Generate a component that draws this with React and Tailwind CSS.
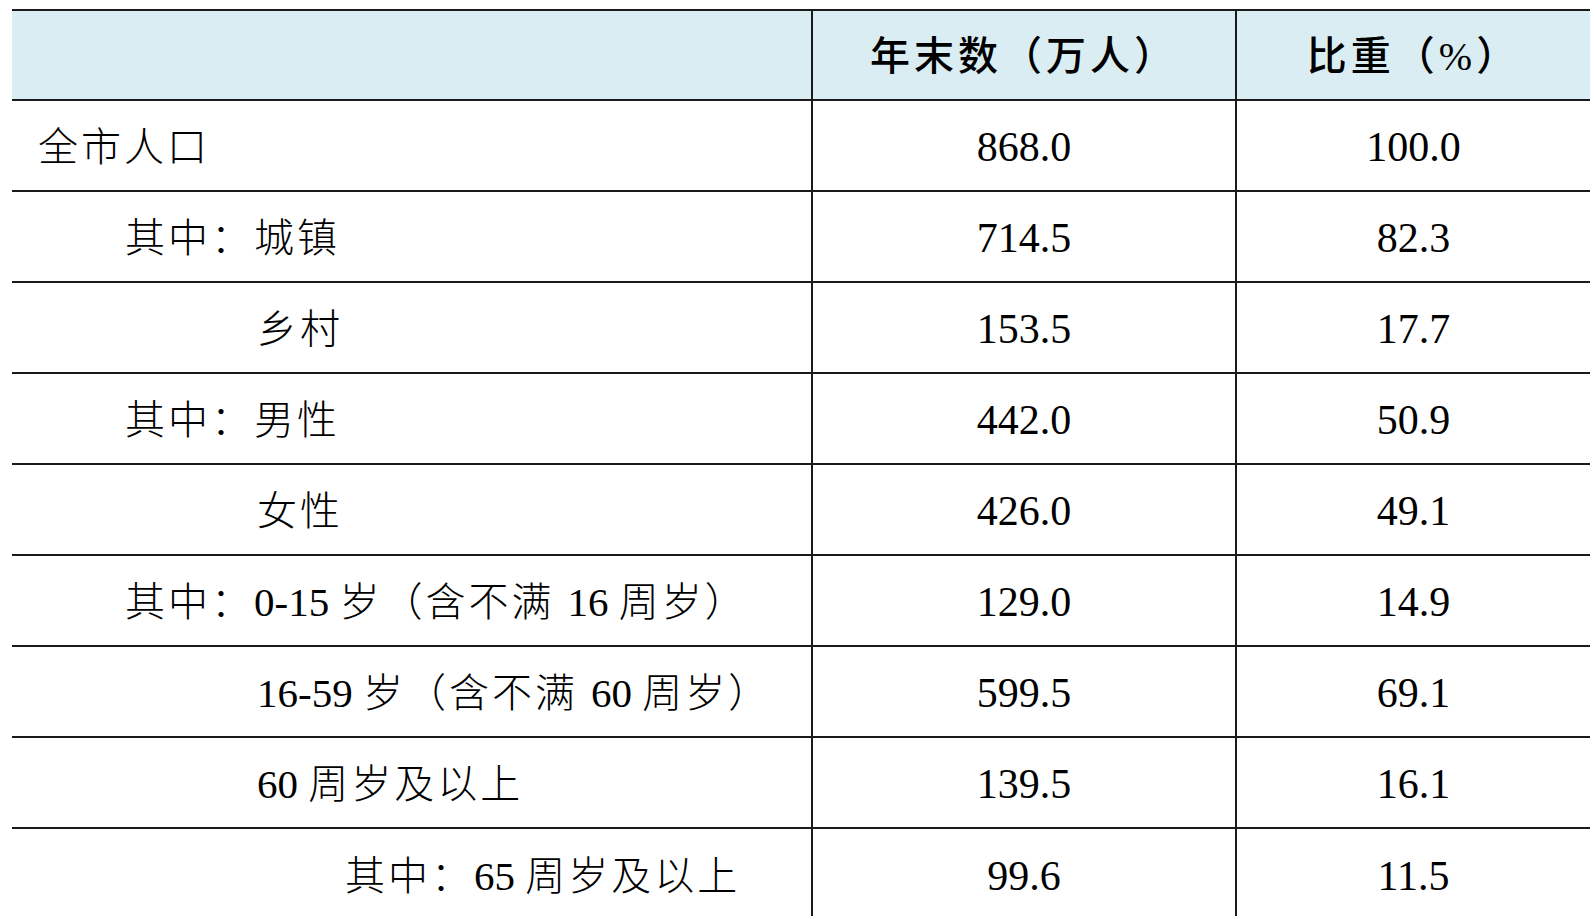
import React from 'react';

const rows = [
  { label: '全市人口', indent: 'pl-[26px]', count: '868.0', share: '100.0' },
  { label: '其中：城镇', indent: 'pl-[113px]', count: '714.5', share: '82.3' },
  { label: '乡村', indent: 'pl-[245px]', count: '153.5', share: '17.7' },
  { label: '其中：男性', indent: 'pl-[113px]', count: '442.0', share: '50.9' },
  { label: '女性', indent: 'pl-[245px]', count: '426.0', share: '49.1' },
  { label: '其中：0-15 岁（含不满 16 周岁）', indent: 'pl-[113px]', count: '129.0', share: '14.9' },
  { label: '16-59 岁（含不满 60 周岁）', indent: 'pl-[245px]', count: '599.5', share: '69.1' },
  { label: '60 周岁及以上', indent: 'pl-[245px]', count: '139.5', share: '16.1' },
  { label: '其中：65 周岁及以上', indent: 'pl-[333px]', count: '99.6', share: '11.5' },
];

// digits stay tight, CJK gets a little spacing like the source table
const Label = ({ text }) =>
  text.split(/([0-9-]+ ?)/).map((part, i) =>
    /[0-9]/.test(part) ? (
      <span key={i} className="tracking-normal font-normal text-[41px]">{part}</span>
    ) : (
      <span key={i}>{part}</span>
    )
  );

const App = () => {
  return (
    <div className="bg-white min-h-screen pl-[12px] pt-[9px] overflow-hidden font-['Liberation_Serif','Noto_Sans_CJK_SC',serif] text-[40px] text-black">
      <div className="w-[1578px] border-t-2 border-[#1a1a1a]">
        {/* Header */}
        <div className="grid grid-cols-[799px_424px_355px] h-[90px] bg-[#daedf2] border-b-2 border-[#1a1a1a]">
          <div></div>
          <div className="border-l-2 border-[#1a1a1a] flex items-center justify-center font-medium tracking-[4px] pt-1">
            年末数（万人）
          </div>
          <div className="border-l-2 border-[#1a1a1a] flex items-center justify-center font-medium tracking-[4px] pt-1">
            比重（%）
          </div>
        </div>

        {/* Body */}
        {rows.map((row, i) => (
          <div
            key={i}
            className={`grid grid-cols-[799px_424px_355px] h-[91px] ${
              i < rows.length - 1 ? 'border-b-2 border-[#1a1a1a]' : ''
            }`}
          >
            <div className={`flex items-center pt-1 whitespace-pre ${row.indent} font-light tracking-[3px]`}>
              <Label text={row.label} />
            </div>
            <div className="border-l-2 border-[#1a1a1a] flex items-center justify-center pt-1 text-[42px]">{row.count}</div>
            <div className="border-l-2 border-[#1a1a1a] flex items-center justify-center pt-1 text-[42px]">{row.share}</div>
          </div>
        ))}
      </div>
    </div>
  );
};

export default App;
